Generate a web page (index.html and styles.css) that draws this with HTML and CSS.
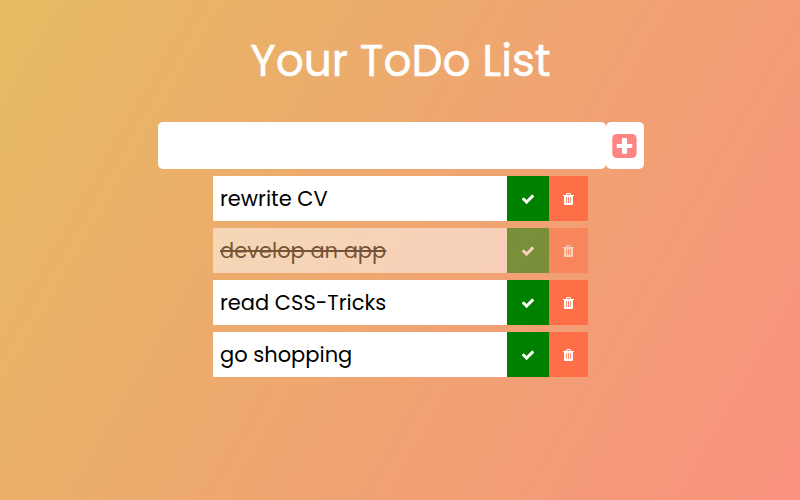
FILE: index.html
```
<!DOCTYPE html>
<html lang="en">
<head>
<meta charset="utf-8">
<title>Your ToDo List</title>
<link rel="stylesheet" href="styles.css">
</head>
<body>
<svg class="defs" width="0" height="0">
  <symbol id="check" viewBox="0 0 1792 1792"><path d="M1671 566q0 40-28 68l-724 724-136 136q-28 28-68 28t-68-28l-136-136-362-362q-28-28-28-68t28-68l136-136q28-28 68-28t68 28l294 295 656-657q28-28 68-28t68 28l136 136q28 28 28 68z"/></symbol>
  <symbol id="trash" viewBox="0 0 11 12"><path fill-rule="evenodd" d="M0 2h2.800L3.300.8Q3.600 0 4.400 0h2.200Q7.400 0 7.700.8L8.200 2H11v1h-1v7.500Q10 12 8.800 12H2.200Q1 12 1 10.500V3H0zM4 2h3L6.700 1H4.300zM3 4v6h.7V4zM5.100 4v6h.8V4zM7.300 4v6h.7V4z"/></symbol>
</svg>
<header><h1>Your ToDo List</h1></header>
<form>
  <input type="text" class="todo-input" aria-label="New todo">
  <button class="add" type="button" aria-label="Add"><svg viewBox="0 0 25 24"><rect x=".3" width="24.300" height="24" rx="4.500" fill="#ff8583"/><rect x="10" y="4" width="5" height="15.800" rx=".8" fill="#fff"/><rect x="4.700" y="10" width="15.600" height="4" rx=".8" fill="#fff"/></svg></button>
</form>
<ul class="todo-list">
  <li class="todo"><span class="label">rewrite CV</span><button class="done"><svg><use href="#check"/></svg></button><button class="remove"><svg><use href="#trash"/></svg></button></li>
  <li class="todo completed"><span class="label">develop an app</span><button class="done"><svg><use href="#check"/></svg></button><button class="remove"><svg><use href="#trash"/></svg></button></li>
  <li class="todo"><span class="label">read CSS-Tricks</span><button class="done"><svg><use href="#check"/></svg></button><button class="remove"><svg><use href="#trash"/></svg></button></li>
  <li class="todo"><span class="label">go shopping</span><button class="done"><svg><use href="#check"/></svg></button><button class="remove"><svg><use href="#trash"/></svg></button></li>
</ul>
</body>
</html>
```
FILE: styles.css
```
* { box-sizing: border-box; margin: 0; padding: 0; }
body {
  min-height: 100vh;
  background: linear-gradient(120deg, #e5bb62, #f9917e);
  font-family: Poppins, Inter, sans-serif;
}
.defs { display: block; }
header { height: 122px; padding: 30px 0 0 1px; }
h1 {
  color: #fff;
  font-size: 43.800px;
  font-weight: 400;
  line-height: 62px;
  text-align: center;
  -webkit-text-stroke: .5px #fff;
}
form { display: flex; height: 47px; padding-left: 158px; }
.todo-input { width: 448px; border: 0; border-radius: 5px; background: #fff; }
button { border: 0; display: flex; align-items: center; justify-content: center; }
.add { width: 38px; border-radius: 5px; background: #fff; }
.add svg { width: 25px; height: 24px; margin-right: 1px; }
.todo-list { width: 375px; margin: 7px 0 0 213px; list-style: none; }
.todo { display: flex; height: 45px; margin-bottom: 7px; background: #fff; }
.label { width: 294px; padding-left: 7px; font-size: 21px; line-height: 45px; color: #000; white-space: nowrap; }
.done { width: 42px; background: #008000; }
.remove { width: 39px; background: #ff6f47; }
.done svg { width: 14px; height: 14px; margin-top: 1px; fill: #fff; }
.remove svg { width: 11px; height: 12px; fill: #fff; }
.completed { opacity: .5; }
.completed .label { text-decoration: line-through; }
```
